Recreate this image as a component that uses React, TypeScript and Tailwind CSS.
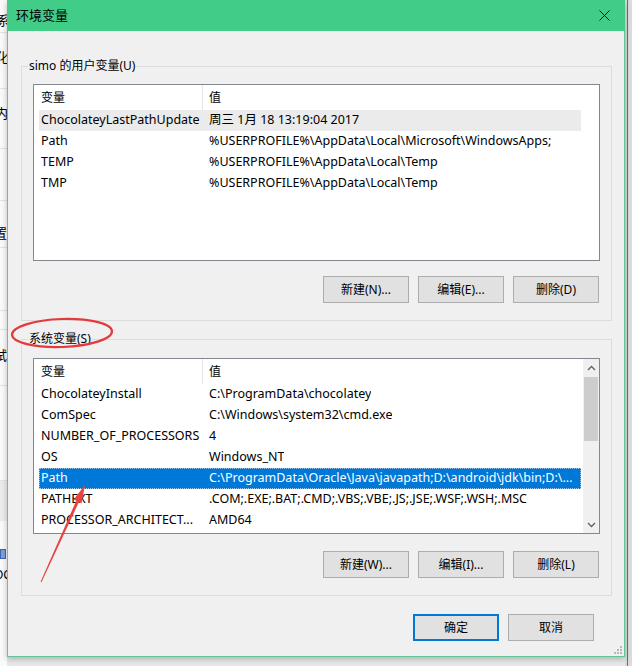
import React from 'react';

type Row = { name: string; value: string };

const userRows: Row[] = [
  { name: 'ChocolateyLastPathUpdate', value: '周三 1月 18 13:19:04 2017' },
  { name: 'Path', value: '%USERPROFILE%\\AppData\\Local\\Microsoft\\WindowsApps;' },
  { name: 'TEMP', value: '%USERPROFILE%\\AppData\\Local\\Temp' },
  { name: 'TMP', value: '%USERPROFILE%\\AppData\\Local\\Temp' },
];

const systemRows: Row[] = [
  { name: 'ChocolateyInstall', value: 'C:\\ProgramData\\chocolatey' },
  { name: 'ComSpec', value: 'C:\\Windows\\system32\\cmd.exe' },
  { name: 'NUMBER_OF_PROCESSORS', value: '4' },
  { name: 'OS', value: 'Windows_NT' },
  { name: 'Path', value: 'C:\\ProgramData\\Oracle\\Java\\javapath;D:\\android\\jdk\\bin;D:\\...' },
  { name: 'PATHEXT', value: '.COM;.EXE;.BAT;.CMD;.VBS;.VBE;.JS;.JSE;.WSF;.WSH;.MSC' },
  { name: 'PROCESSOR_ARCHITECT...', value: 'AMD64' },
];

const Chevron = ({ up }: { up?: boolean }) => (
  <svg width="9" height="6" viewBox="0 0 9 6">
    <path
      d={up ? 'M1 5 L4.5 1.5 L8 5' : 'M1 1 L4.5 4.5 L8 1'}
      fill="none"
      stroke="#606060"
      strokeWidth="1.3"
    />
  </svg>
);

const Scrollbar = () => (
  <div className="w-[17px] ml-[2px] bg-[#f0f0f0] flex flex-col">
    <div className="h-[17px] flex items-center justify-center">
      <Chevron up />
    </div>
    <div className="h-[64px] mx-[1px] mt-[1px] bg-[#cdcdcd]" />
    <div className="flex-1" />
    <div className="h-[17px] flex items-center justify-center">
      <Chevron />
    </div>
  </div>
);

interface VarListProps {
  rows: Row[];
  height: string;
  highlight?: number;
  selected?: number;
  scroll?: boolean;
}

const VarList: React.FC<VarListProps> = ({ rows, height, highlight, selected, scroll }) => (
  <div className={`${height} border border-[#828790] bg-white flex text-[12.5px]`}>
    <div className="flex flex-col">
      <div className="h-[25px] flex text-[12px]">
        <div className="w-[169px] pl-[7px] flex items-center border-r border-[#e5e5e5]">变量</div>
        <div className="pl-[6px] flex items-center">值</div>
      </div>
      {rows.map((row, i) => {
        const isSel = i === selected;
        const isHi = i === highlight;
        return (
          <div
            key={row.name + i}
            className={`ml-[5px] w-[542px] h-[21px] flex items-center whitespace-nowrap ${
              isSel
                ? 'bg-[#0078d7] text-white outline-1 outline-dotted outline-[#9cc7ee] -outline-offset-1'
                : isHi
                  ? 'bg-[#ebebeb]'
                  : ''
            }`}
          >
            <div className="w-[164px] pl-[2px] shrink-0 overflow-hidden">{row.name}</div>
            <div className="pl-[6px] overflow-hidden">{row.value}</div>
          </div>
        );
      })}
    </div>
    <div className="flex-1" />
    {scroll && <Scrollbar />}
  </div>
);

const Button = ({ label, primary }: { label: string; primary?: boolean }) => (
  <div
    className={`w-[86px] h-[27px] flex items-center justify-center bg-[#e1e1e1] ${
      primary ? 'border-2 border-[#0078d7]' : 'border border-[#adadad]'
    }`}
  >
    {label}
  </div>
);

const Group = ({
  legend,
  pt,
  children,
}: {
  legend: string;
  pt: string;
  children: React.ReactNode;
}) => (
  <div className={`relative border border-[#dcdcdc] px-[11px] pb-[17px] ${pt}`}>
    <span className="absolute left-[6px] -top-[9px] px-[1px] bg-[#f0f0f0] leading-[16px]">
      {legend}
    </span>
    {children}
  </div>
);

// sliver of the window behind the dialog
const BackWindow = () => (
  <div className="w-[7px] h-full bg-[#fafafa] overflow-hidden flex flex-col text-[13px] leading-[16px] text-black">
    <div className="h-[33px] border-b border-[#e3e3e3] pt-[12px] -ml-[3px]">系</div>
    <div className="h-[56px] border-b border-[#e3e3e3] pt-[16px] -ml-[4px]">化</div>
    <div className="h-[60px] border-b border-[#e3e3e3] pt-[16px] -ml-[5px]">内</div>
    <div className="h-[52px] border-b border-[#e3e3e3]" />
    <div className="h-[47px] border-b border-[#e3e3e3] pt-[24px] -ml-[6px]">置</div>
    <div className="h-[63px] border-b border-[#e3e3e3]" />
    <div className="h-[19px] border-b border-[#e3e3e3]" />
    <div className="h-[56px] border-b border-[#e3e3e3] pt-[17px] -ml-[6px]">试</div>
    <div className="h-[95px] border-b border-[#e3e3e3]" />
    <div className="h-[40px] bg-[#ececec]" />
    <div className="h-[40px] flex items-end pb-[2px]">
      <div className="w-[6px] h-[10px] bg-[#7f9fd4] border border-[#3c64b4]" />
    </div>
    <div className="pt-[6px] -ml-[6px] text-[12px]">OC</div>
  </div>
);

export default function App() {
  return (
    <div className="w-[632px] h-[666px] flex bg-[#e8e8e8] overflow-hidden relative text-[12px] text-black font-['Noto_Sans','Noto_Sans_CJK_SC',sans-serif]">
      <BackWindow />
      <div className="relative w-[618px] h-[657px] flex flex-col border-x border-b border-[#62c497] bg-[#f0f0f0] shadow-[0_2px_6px_rgba(0,0,0,0.25)]">
        <div className="h-[31px] -mx-[1px] bg-[#41cd88] flex items-center justify-between pl-[9px] pr-[15px]">
          <span className="text-[13px]">环境变量</span>
          <svg width="11" height="11" viewBox="0 0 11 11">
            <path d="M0.5 0.5 L10.5 10.5 M10.5 0.5 L0.5 10.5" stroke="#111" strokeWidth="1" />
          </svg>
        </div>
        <div className="flex-1 flex flex-col pl-[13px] pr-[12px] pt-[35px]">
          <Group legend="simo 的用户变量(U)" pt="pt-[17px]">
            <VarList rows={userRows} height="h-[177px]" highlight={0} />
            <div className="mt-[15px] flex justify-end gap-[9px] pr-[1px]">
              <Button label="新建(N)..." />
              <Button label="编辑(E)..." />
              <Button label="删除(D)" />
            </div>
          </Group>
          <div className="mt-[18px]">
            <Group legend="系统变量(S)" pt="pt-[18px]">
              <VarList rows={systemRows} height="h-[176px]" selected={4} scroll />
              <div className="mt-[17px] flex justify-end gap-[9px] pr-[1px]">
                <Button label="新建(W)..." />
                <Button label="编辑(I)..." />
                <Button label="删除(L)" />
              </div>
            </Group>
          </div>
          <div className="mt-[18px] flex justify-end gap-[9px] pr-[18px]">
            <Button label="确定" primary />
            <Button label="取消" />
          </div>
        </div>
        <svg className="absolute right-[2px] bottom-[2px]" width="10" height="10" viewBox="0 0 10 10">
          <g fill="#b8b8b8">
            <rect x="8" y="2" width="2" height="2" />
            <rect x="5" y="5" width="2" height="2" />
            <rect x="8" y="5" width="2" height="2" />
            <rect x="2" y="8" width="2" height="2" />
            <rect x="5" y="8" width="2" height="2" />
            <rect x="8" y="8" width="2" height="2" />
          </g>
        </svg>
      </div>
      <div className="flex-1 h-full bg-[#dcdcdc] flex">
        <div className="w-[2px]" />
        <div className="w-[1px] h-full bg-[#6e6e6e]" />
      </div>
      <svg className="absolute left-0 top-0 pointer-events-none" width="632" height="666">
        <ellipse
          cx="62"
          cy="333"
          rx="50"
          ry="14"
          transform="rotate(-2 62 333)"
          fill="none"
          stroke="#e5393b"
          strokeWidth="2.2"
        />
        <polygon
          points="41.5,582.2 79,502 81.5,503.4 85,485 73.6,499.6 76.2,500.8 40.6,581.8"
          fill="#e8453f"
        />
      </svg>
    </div>
  );
}
